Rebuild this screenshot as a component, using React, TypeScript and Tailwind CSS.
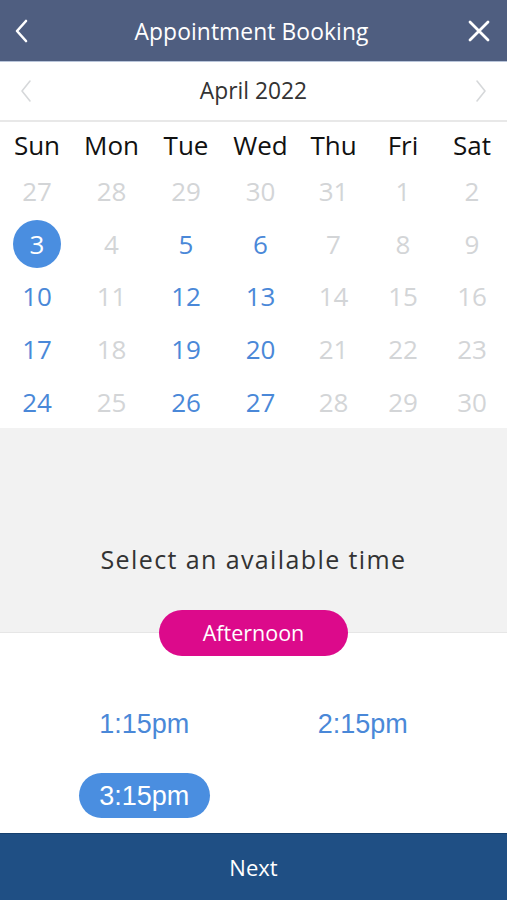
import React from "react";

const weekdays = ["Sun", "Mon", "Tue", "Wed", "Thu", "Fri", "Sat"];
type Day = { n: number; kind: "muted" | "avail" | "sel" };
const rows: Day[][] = [
  [27, 28, 29, 30, 31, 1, 2].map((n) => ({ n, kind: "muted" as const })),
  [
    { n: 3, kind: "sel" },
    { n: 4, kind: "muted" },
    { n: 5, kind: "avail" },
    { n: 6, kind: "avail" },
    { n: 7, kind: "muted" },
    { n: 8, kind: "muted" },
    { n: 9, kind: "muted" },
  ],
  [10, 11, 12, 13, 14, 15, 16].map((n, i) => ({ n, kind: i === 0 || i === 2 || i === 3 ? ("avail" as const) : ("muted" as const) })),
  [17, 18, 19, 20, 21, 22, 23].map((n, i) => ({ n, kind: i === 0 || i === 2 || i === 3 ? ("avail" as const) : ("muted" as const) })),
  [24, 25, 26, 27, 28, 29, 30].map((n, i) => ({ n, kind: i === 0 || i === 2 || i === 3 ? ("avail" as const) : ("muted" as const) })),
];

const gridCols = "grid grid-cols-[74px_75px_74px_75px_71px_68px_70px]";

export default function App() {
  return (
    <div
      className="w-[507px] h-[900px] flex flex-col bg-white overflow-hidden"
      style={{ fontFamily: '"Open Sans", "Noto Sans", sans-serif' }}
    >
      {/* Header */}
      <div className="h-[62px] shrink-0 bg-[#4f5e80] border-b border-[#b9c5da] flex items-center justify-between px-[12px]">
        <svg width="20" height="24" viewBox="0 0 20 24">
          <path d="M14 2 L5 12 L14 22" stroke="white" strokeWidth="2.6" fill="none" strokeLinecap="round" strokeLinejoin="round" />
        </svg>
        <div className="text-white text-[22.8px] leading-none tracking-[0.1px] pl-[4px] pt-[3px]">Appointment Booking</div>
        <svg width="24" height="24" viewBox="0 0 24 24" className="mr-[4px]">
          <path d="M3 3 L21 21 M21 3 L3 21" stroke="white" strokeWidth="2.8" strokeLinecap="round" />
        </svg>
      </div>

      {/* Month */}
      <div className="h-[60px] shrink-0 border-b-2 border-[#e8e8e8] flex items-center justify-between px-[18px]">
        <svg width="16" height="24" viewBox="0 0 16 24">
          <path d="M12 2 L4 12 L12 22" stroke="#d6d8da" strokeWidth="1.6" fill="none" strokeLinecap="round" strokeLinejoin="round" />
        </svg>
        <div className="text-[#333333] text-[22.8px] leading-none">April 2022</div>
        <svg width="16" height="24" viewBox="0 0 16 24">
          <path d="M4 2 L12 12 L4 22" stroke="#d6d8da" strokeWidth="1.6" fill="none" strokeLinecap="round" strokeLinejoin="round" />
        </svg>
      </div>

      {/* Weekdays */}
      <div className={`${gridCols} h-[43px] shrink-0 items-center`}>
        {weekdays.map((w) => (
          <div key={w} className="text-center text-[26px] leading-none text-[#111111] pt-[3px]">
            {w}
          </div>
        ))}
      </div>

      {/* Dates */}
      <div className="flex flex-col shrink-0">
        {rows.map((r, ri) => (
          <div key={ri} className={`${gridCols} h-[52.6px] items-center`}>
            {r.map((d, di) => (
              <div key={di} className="flex items-center justify-center">
                {d.kind === "sel" ? (
                  <div className="w-[48px] h-[48px] rounded-full bg-[#4a8ee0] text-white text-[26px] leading-none flex items-center justify-center">
                    {d.n}
                  </div>
                ) : (
                  <div
                    className={`text-[26px] leading-none ${
                      d.kind === "avail" ? "text-[#4a88d8]" : "text-[#d3d5d7]"
                    }`}
                  >
                    {d.n}
                  </div>
                )}
              </div>
            ))}
          </div>
        ))}
      </div>

      {/* Gray section */}
      <div className="h-[205px] shrink-0 bg-[#f2f2f2] border-b border-[#e6e6e6] flex justify-center pt-[114px]">
        <div className="text-[25px] leading-[34px] tracking-[1.4px] text-[#333333]">Select an available time</div>
      </div>

      {/* Afternoon pill */}
      <div className="flex justify-center -mt-[23px] relative z-10 shrink-0">
        <div className="w-[189px] h-[46px] rounded-full bg-[#dc0a8b] text-white text-[21.5px] flex items-center justify-center">
          Afternoon
        </div>
      </div>

      {/* Times */}
      <div
        className="grid grid-cols-2 px-[35px] pt-[30px] flex-1"
        style={{ fontFamily: '"Liberation Sans", Arial, sans-serif' }}
      >
        <div className="h-[73px] flex items-center justify-center text-[27px] text-[#4a88d8] pt-[3px]">1:15pm</div>
        <div className="h-[73px] flex items-center justify-center text-[27px] text-[#4a88d8] pt-[3px]">2:15pm</div>
        <div className="h-[73px] flex items-center justify-center">
          <div className="w-[131px] h-[45px] rounded-full bg-[#4a8ee0] text-white text-[27px] flex items-center justify-center">
            3:15pm
          </div>
        </div>
      </div>

      {/* Next */}
      <div className="h-[67px] shrink-0 bg-[#1f4f84] border-t border-[#16406e] flex items-center justify-center">
        <div className="text-white text-[22px] leading-none">Next</div>
      </div>
    </div>
  );
}
